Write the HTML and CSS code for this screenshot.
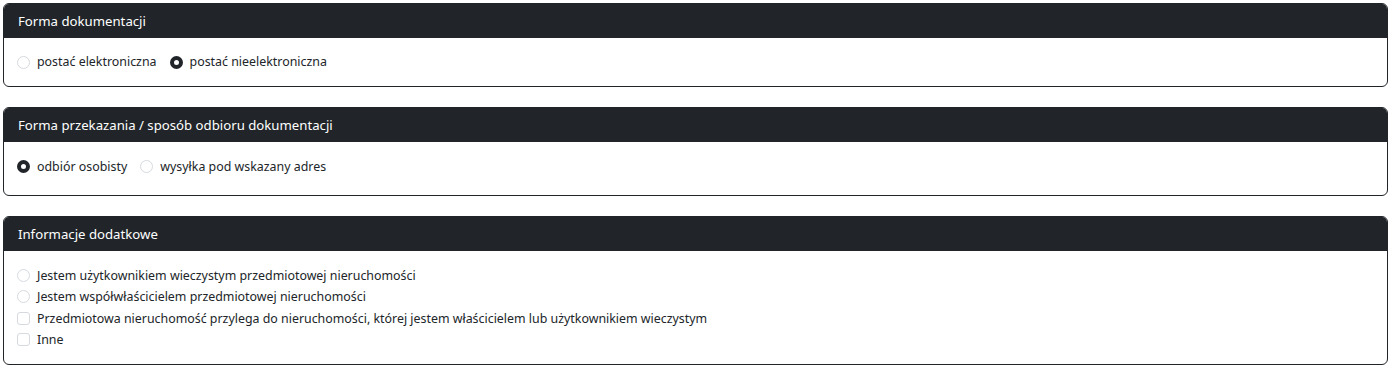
FILE: index.html
```html
<!DOCTYPE html>
<html lang="pl">
<head>
  <meta charset="UTF-8">
  <meta name="viewport" content="width=device-width, initial-scale=1.0">
  <title>Dokumentacja</title>
  <link rel="stylesheet" href="styles.css">
</head>
<body>
  <div class="card">
    <div class="card-header">Forma dokumentacji</div>
    <div class="card-body">
      <label class="check inline"><input type="radio" name="forma"> postać elektroniczna</label>
      <label class="check inline"><input type="radio" name="forma" checked> postać nieelektroniczna</label>
    </div>
  </div>

  <div class="card">
    <div class="card-header">Forma przekazania / sposób odbioru dokumentacji</div>
    <div class="card-body body-tall">
      <label class="check inline"><input type="radio" name="odbior" checked> odbiór osobisty</label>
      <label class="check inline"><input type="radio" name="odbior"> wysyłka pod wskazany adres</label>
    </div>
  </div>

  <div class="card">
    <div class="card-header">Informacje dodatkowe</div>
    <div class="card-body list">
      <label class="check"><input type="radio" name="info"> Jestem użytkownikiem wieczystym przedmiotowej nieruchomości</label>
      <label class="check"><input type="radio" name="info"> Jestem współwłaścicielem przedmiotowej nieruchomości</label>
      <label class="check"><input type="checkbox"> Przedmiotowa nieruchomość przylega do nieruchomości, której jestem właścicielem lub użytkownikiem wieczystym</label>
      <label class="check"><input type="checkbox"> Inne</label>
    </div>
  </div>
</body>
</html>
```

FILE: styles.css
```css
* {
  box-sizing: border-box;
}

body {
  margin: 3px;
  font-family: 'Segoe UI', 'Noto Sans', sans-serif;
  font-size: 12.4px;
  color: #212529;
  background: #fff;
}

.card {
  border: 1px solid #212529;
  border-radius: 6px;
  overflow: hidden;
  margin-bottom: 20px;
}

.card:last-child {
  margin-bottom: 0;
}

.card-header {
  background: #212529;
  color: #fff;
  font-size: 13.2px;
  height: 34px;
  padding: 0 14px;
  display: flex;
  align-items: center;
}

.card-body {
  padding: 0 13px;
  display: flex;
  align-items: center;
  gap: 13px;
  height: 48px;
}

.card-body.body-tall {
  height: 53px;
  padding-bottom: 4px;
}

.card-body.list {
  height: 113px;
  flex-direction: column;
  align-items: flex-start;
  justify-content: center;
  gap: 0;
}

.check {
  display: flex;
  align-items: center;
  gap: 7px;
  line-height: 21.4px;
}

.check input {
  appearance: none;
  -webkit-appearance: none;
  width: 13px;
  height: 13px;
  margin: 0;
  border: 1px solid #d6dadf;
  background: #fff;
  flex-shrink: 0;
}

.check input[type="radio"] {
  border-radius: 50%;
}

.check input[type="checkbox"] {
  border-radius: 3px;
}

.check input[type="radio"]:checked {
  border: 4px solid #212529;
}
```
